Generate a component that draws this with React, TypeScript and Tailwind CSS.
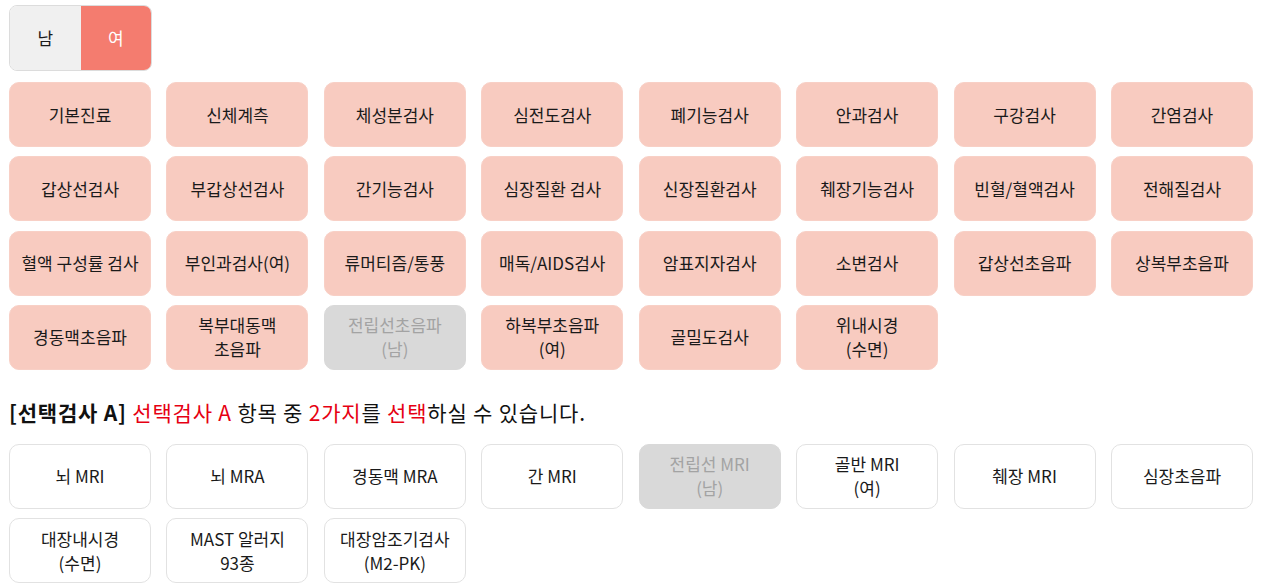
const font = { fontFamily: '"Noto Sans CJK KR", "Noto Sans", sans-serif' };

type Item = { label: string[]; disabled?: boolean };

const basicItems: Item[] = [
  { label: ['기본진료'] },
  { label: ['신체계측'] },
  { label: ['체성분검사'] },
  { label: ['심전도검사'] },
  { label: ['폐기능검사'] },
  { label: ['안과검사'] },
  { label: ['구강검사'] },
  { label: ['간염검사'] },
  { label: ['갑상선검사'] },
  { label: ['부갑상선검사'] },
  { label: ['간기능검사'] },
  { label: ['심장질환 검사'] },
  { label: ['신장질환검사'] },
  { label: ['췌장기능검사'] },
  { label: ['빈혈/혈액검사'] },
  { label: ['전해질검사'] },
  { label: ['혈액 구성률 검사'] },
  { label: ['부인과검사(여)'] },
  { label: ['류머티즘/통풍'] },
  { label: ['매독/AIDS검사'] },
  { label: ['암표지자검사'] },
  { label: ['소변검사'] },
  { label: ['갑상선초음파'] },
  { label: ['상복부초음파'] },
  { label: ['경동맥초음파'] },
  { label: ['복부대동맥', '초음파'] },
  { label: ['전립선초음파', '(남)'], disabled: true },
  { label: ['하복부초음파', '(여)'] },
  { label: ['골밀도검사'] },
  { label: ['위내시경', '(수면)'] },
];

const optionItems: Item[] = [
  { label: ['뇌 MRI'] },
  { label: ['뇌 MRA'] },
  { label: ['경동맥 MRA'] },
  { label: ['간 MRI'] },
  { label: ['전립선 MRI', '(남)'], disabled: true },
  { label: ['골반 MRI', '(여)'] },
  { label: ['췌장 MRI'] },
  { label: ['심장초음파'] },
  { label: ['대장내시경', '(수면)'] },
  { label: ['MAST 알러지', '93종'] },
  { label: ['대장암조기검사', '(M2-PK)'] },
];

function Cell({ item, variant }: { item: Item; variant: 'basic' | 'option' }) {
  const tone = item.disabled
    ? 'bg-[#d9d9d9] border-[#d9d9d9] text-[#a3a3a3]'
    : variant === 'basic'
      ? 'bg-[#f8cbc0] border-[#f8d0c6] text-[#1a1a1a]'
      : 'bg-white border-[#e2e2e2] text-[#1a1a1a]';
  return (
    <div
      className={`flex h-[65px] flex-col items-center justify-center rounded-[10px] border text-[17px] leading-[24px] ${tone}`}
    >
      {item.label.map((line) => (
        <span key={line}>{line}</span>
      ))}
    </div>
  );
}

export default function App() {
  return (
    <div className="bg-white pl-[9px] pt-[5px]" style={font}>
      {/* Gender toggle */}
      <div className="flex h-[66px] w-[143px] overflow-hidden rounded-[8px] border border-[#dcdcdc] text-[17px]">
        <div className="flex flex-1 items-center justify-center bg-[#f0f0f0] text-[#1a1a1a]">남</div>
        <div className="flex flex-1 items-center justify-center bg-[#f47c6f] text-white">여</div>
      </div>

      {/* Basic exams */}
      <div className="mt-[11px] grid w-[1244px] grid-cols-8 gap-x-[15.43px] gap-y-[9.3px]">
        {basicItems.map((item) => (
          <Cell key={item.label.join()} item={item} variant="basic" />
        ))}
      </div>

      {/* Option A heading */}
      <p className="mt-[28px] text-[21px] leading-[28px] tracking-[0.8px] text-[#111]">
        <span className="font-bold">[선택검사 A]</span>{' '}
        <span className="text-[#e60012]">선택검사 A</span> 항목 중{' '}
        <span className="text-[#e60012]">2가지</span>를{' '}
        <span className="text-[#e60012]">선택</span>하실 수 있습니다.
      </p>

      <div className="mt-[18px] grid w-[1244px] grid-cols-8 gap-x-[15.43px] gap-y-[9.3px]">
        {optionItems.map((item) => (
          <Cell key={item.label.join()} item={item} variant="option" />
        ))}
      </div>
    </div>
  );
}
